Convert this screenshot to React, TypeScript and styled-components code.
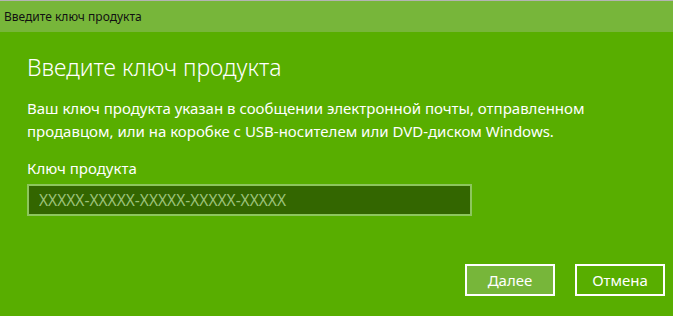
import styled, { createGlobalStyle } from 'styled-components';

const GlobalStyle = createGlobalStyle`
  html, body {
    margin: 0;
    padding: 0;
    width: 673px;
    height: 316px;
    overflow: hidden;
    background: #58ae00;
  }
  * {
    box-sizing: border-box;
  }
`;

const Window = styled.div`
  width: 673px;
  height: 316px;
  display: flex;
  flex-direction: column;
  background: #58ae00;
  font-family: 'Noto Sans', 'Open Sans', sans-serif;
`;

const BackdropStrip = styled.div`
  height: 1px;
  background: #b4b4b4;
`;

const TitleBar = styled.div`
  height: 31px;
  display: flex;
  align-items: center;
  padding-left: 4px;
  background: #77b63a;
  color: #111;
  font-size: 12px;
`;

const Content = styled.div`
  flex: 1;
  display: flex;
  flex-direction: column;
  padding: 19px 8px 20px 27px;
  color: #fff;
`;

const Heading = styled.h1`
  margin: 0;
  font-size: 23px;
  font-weight: 300;
  line-height: 32px;
`;

const Description = styled.p`
  margin: 14px 0 0;
  font-size: 15px;
  line-height: 23px;
`;

const FieldLabel = styled.label`
  margin-top: 14px;
  font-size: 15px;
  line-height: 22px;
`;

const KeyInput = styled.input`
  margin-top: 5px;
  width: 445px;
  height: 32px;
  padding: 0 10px;
  border: 2px solid #8dc65d;
  background: #336600;
  color: #fff;
  font-family: inherit;
  font-size: 15.5px;
  outline: none;

  &::placeholder {
    color: #9cc27a;
  }
`;

const Actions = styled.div`
  margin-top: auto;
  display: flex;
  justify-content: flex-end;
  gap: 20px;
`;

const Button = styled.button<{ $primary?: boolean }>`
  width: 90px;
  height: 32px;
  border: 2px solid #fff;
  background: ${({ $primary }) => ($primary ? '#77b63a' : '#58ae00')};
  color: #fff;
  font-family: inherit;
  font-size: 15px;
  cursor: pointer;
`;

const App = () => {
  return (
    <>
      <GlobalStyle />
      <Window>
        <BackdropStrip />
        <TitleBar>Введите ключ продукта</TitleBar>
        <Content>
          <Heading>Введите ключ продукта</Heading>
          <Description>
            Ваш ключ продукта указан в сообщении электронной почты, отправленном
            <br />
            продавцом, или на коробке с USB-носителем или DVD-диском Windows.
          </Description>
          <FieldLabel htmlFor="product-key">Ключ продукта</FieldLabel>
          <KeyInput id="product-key" placeholder="XXXXX-XXXXX-XXXXX-XXXXX-XXXXX" />
          <Actions>
            <Button $primary>Далее</Button>
            <Button>Отмена</Button>
          </Actions>
        </Content>
      </Window>
    </>
  );
};

export default App;
